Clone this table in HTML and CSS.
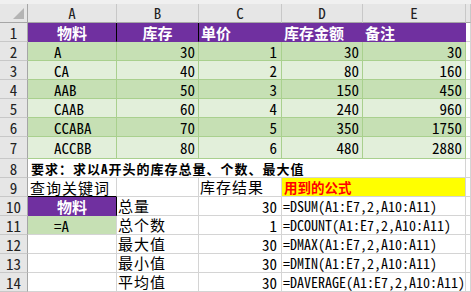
FILE: index.html
```html
<!DOCTYPE html>
<html lang="zh-CN">
<head>
<meta charset="utf-8">
<title>DSUM 查询示例</title>
<link rel="stylesheet" href="styles.css">
</head>
<body>
<div class="topbar"></div>
<div class="sheet">
  <div class="corner"><svg class="corner-tri" width="27" height="18" viewBox="0 0 27 18"><polygon points="13,15 24,15 24,4" fill="#b4b4b4"/></svg></div>
  <div class="colhead">A</div>
  <div class="colhead">B</div>
  <div class="colhead">C</div>
  <div class="colhead">D</div>
  <div class="colhead">E</div>
  <div class="colhead"></div>

  <div class="rowhead">1</div>
  <div class="head head-c head-sep">物料</div>
  <div class="head head-c head-sep">库存</div>
  <div class="head head-l">单价</div>
  <div class="head head-l">库存金额</div>
  <div class="head head-l">备注</div>
  <div class="blank"></div>

  <div class="rowhead">2</div>
  <div class="g dark name">A</div>
  <div class="g dark num">30</div>
  <div class="g dark num num-c">1</div>
  <div class="g dark num">30</div>
  <div class="g dark num">30</div>
  <div class="blank"></div>

  <div class="rowhead">3</div>
  <div class="g light name">CA</div>
  <div class="g light num">40</div>
  <div class="g light num num-c">2</div>
  <div class="g light num">80</div>
  <div class="g light num">160</div>
  <div class="blank"></div>

  <div class="rowhead">4</div>
  <div class="g dark name">AAB</div>
  <div class="g dark num">50</div>
  <div class="g dark num num-c">3</div>
  <div class="g dark num">150</div>
  <div class="g dark num">450</div>
  <div class="blank"></div>

  <div class="rowhead">5</div>
  <div class="g light name">CAAB</div>
  <div class="g light num">60</div>
  <div class="g light num num-c">4</div>
  <div class="g light num">240</div>
  <div class="g light num">960</div>
  <div class="blank"></div>

  <div class="rowhead">6</div>
  <div class="g dark name">CCABA</div>
  <div class="g dark num">70</div>
  <div class="g dark num num-c">5</div>
  <div class="g dark num">350</div>
  <div class="g dark num">1750</div>
  <div class="blank"></div>

  <div class="rowhead tall">7</div>
  <div class="g light name tall">ACCBB</div>
  <div class="g light num tall">80</div>
  <div class="g light num num-c tall">6</div>
  <div class="g light num tall">480</div>
  <div class="g light num tall">2880</div>
  <div class="blank tall"></div>

  <div class="rowhead">8</div>
  <div class="note">要求：求以A开头的库存总量、个数、最大值</div>
  <div class="blank"></div>

  <div class="rowhead">9</div>
  <div class="label label-a9">查询关键词</div>
  <div class="plain"></div>
  <div class="label">库存结果</div>
  <div class="formula-title">用到的公式</div>
  <div class="blank"></div>

  <div class="rowhead">10</div>
  <div class="crit-head">物料</div>
  <div class="label">总量</div>
  <div class="plain num num-c">30</div>
  <div class="formula">=DSUM(A1:E7,2,A10:A11)</div>
  <div class="blank"></div>

  <div class="rowhead">11</div>
  <div class="crit name">=A</div>
  <div class="label">总个数</div>
  <div class="plain num num-c">1</div>
  <div class="formula">=DCOUNT(A1:E7,2,A10:A11)</div>
  <div class="blank"></div>

  <div class="rowhead">12</div>
  <div class="plain"></div>
  <div class="label">最大值</div>
  <div class="plain num num-c">30</div>
  <div class="formula">=DMAX(A1:E7,2,A10:A11)</div>
  <div class="blank"></div>

  <div class="rowhead">13</div>
  <div class="plain"></div>
  <div class="label">最小值</div>
  <div class="plain num num-c">30</div>
  <div class="formula">=DMIN(A1:E7,2,A10:A11)</div>
  <div class="blank"></div>

  <div class="rowhead">14</div>
  <div class="plain"></div>
  <div class="label">平均值</div>
  <div class="plain num num-c">30</div>
  <div class="formula">=DAVERAGE(A1:E7,2,A10:A11)</div>
  <div class="blank"></div>
</div>
</body>
</html>
```

FILE: styles.css
```css
html, body {
  margin: 0;
  padding: 0;
  background: #ffffff;
}

body {
  width: 471px;
  height: 292px;
  overflow: hidden;
  font-family: "Noto Sans Mono CJK SC", "Noto Sans CJK SC", "Liberation Mono", monospace;
  font-size: 15px;
  color: #000000;
}

.topbar {
  height: 4px;
  background: #f0f0f0;
}

.sheet {
  display: grid;
  grid-template-columns: 28px 89px 82px 83px 81px 103px 5px;
  grid-template-rows: 19px repeat(6, 19px) 22px repeat(7, 19px);
}

.sheet > div {
  box-sizing: border-box;
  min-width: 0;
  white-space: nowrap;
  line-height: 19px;
  border-right: 1px solid #d4d4d4;
  border-bottom: 1px solid #d4d4d4;
}

.sheet > .tall {
  line-height: 22px;
}

/* headers */
.corner {
  background: #e6e6e6;
  border-right-color: #a6a6a6 !important;
  border-bottom-color: #a6a6a6 !important;
}

.corner-tri {
  display: block;
}

.colhead {
  background: #e6e6e6;
  color: #222222;
  text-align: center;
  line-height: 17px !important;
  border-right-color: #c8c8c8 !important;
  border-bottom-color: #a6a6a6 !important;
}

.rowhead {
  background: #e6e6e6;
  color: #222222;
  text-align: center;
  border-right-color: #a6a6a6 !important;
  border-bottom-color: #c8c8c8 !important;
}

/* purple header row */
.head {
  background: #7030a0;
  color: #ffffff;
  font-weight: bold;
  border-right-color: #7030a0 !important;
  border-bottom-color: #7030a0 !important;
}

.head-c {
  text-align: center;
}

.head-sep {
  border-right-color: #000000 !important;
}

.head-l {
  padding-left: 2px;
}

/* green data rows */
.g {
  border-right-color: #a9d08e !important;
  border-bottom-color: #a9d08e !important;
}

.dark {
  background: #c6e0b4;
}

.light {
  background: #e2efda;
}

.name {
  padding-left: 26px;
}

.num {
  text-align: right;
  padding-right: 3px;
}

.num-c {
  padding-right: 4px;
}

/* lower block */
.note {
  grid-column: span 5;
  font-weight: bold;
  font-size: 13px;
  letter-spacing: 1px;
  padding-left: 3px;
}

.sheet > .label {
  font-size: 15px;
  letter-spacing: 1px;
  padding-left: 1px;
  line-height: 17px;
}

.sheet > .label-a9 {
  padding-left: 2px;
  line-height: 19px;
  border-bottom-color: #000000;
}

.formula-title {
  grid-column: span 2;
  background: #ffff00;
  color: #ff0000;
  font-weight: bold;
  font-size: 13.5px;
  padding-left: 2px;
}

.crit-head {
  background: #7030a0;
  color: #ffffff;
  font-weight: bold;
  text-align: center;
  border-right-color: #000000 !important;
  border-bottom-color: #7030a0 !important;
}

.crit {
  background: #c6e0b4;
}

.formula {
  grid-column: span 2;
  font-size: 14px;
  padding-left: 1px;
}
```
